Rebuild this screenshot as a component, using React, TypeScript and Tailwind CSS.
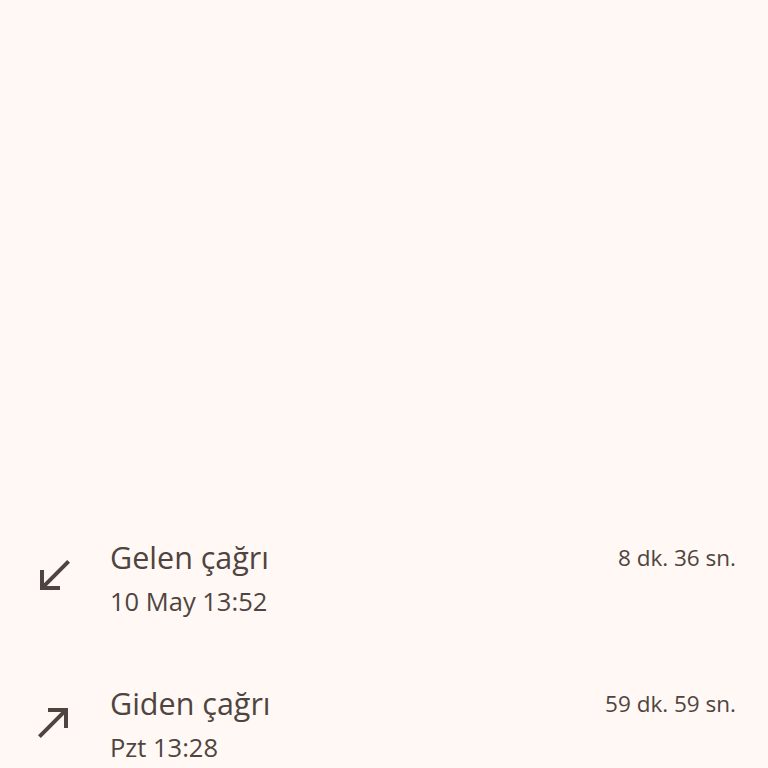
import React from 'react';

type Call = { title: string; time: string; duration: string; dir: 'in' | 'out' };

const calls: Call[] = [
  { title: 'Gelen çağrı', time: '10 May 13:52', duration: '8 dk. 36 sn.', dir: 'in' },
  { title: 'Giden çağrı', time: 'Pzt 13:28', duration: '59 dk. 59 sn.', dir: 'out' },
];

const ArrowIcon: React.FC<{ dir: 'in' | 'out' }> = ({ dir }) => (
  <svg viewBox="0 0 24 24" className="w-12 h-12 fill-[#4f4540]">
    {dir === 'in' ? (
      <path d="M20 5.41L18.59 4 7 15.59V9H5v10h10v-2H8.41z" />
    ) : (
      <path d="M9 5v2h6.59L4 18.59 5.41 20 17 8.41V15h2V5z" />
    )}
  </svg>
);

export default function App() {
  return (
    <div
      className="h-[768px] overflow-hidden bg-[#fff8f5] text-[#4f4540] pt-[535px]"
      style={{ fontFamily: '"Open Sans", Roboto, sans-serif' }}
    >
      <div className="flex flex-col gap-[58px]">
        {calls.map((c) => (
          <div key={c.title} className="flex items-center pl-[30px] pr-[32px]">
            <div className="w-[80px] shrink-0 -mt-[6px]">
              <ArrowIcon dir={c.dir} />
            </div>
            <div className="flex-1">
              <div className="text-[30.5px] leading-[44px]">{c.title}</div>
              <div className="text-[25.5px] leading-[44px]">{c.time}</div>
            </div>
            <div className="self-start text-[22.5px] leading-[46px]">{c.duration}</div>
          </div>
        ))}
      </div>
    </div>
  );
}
